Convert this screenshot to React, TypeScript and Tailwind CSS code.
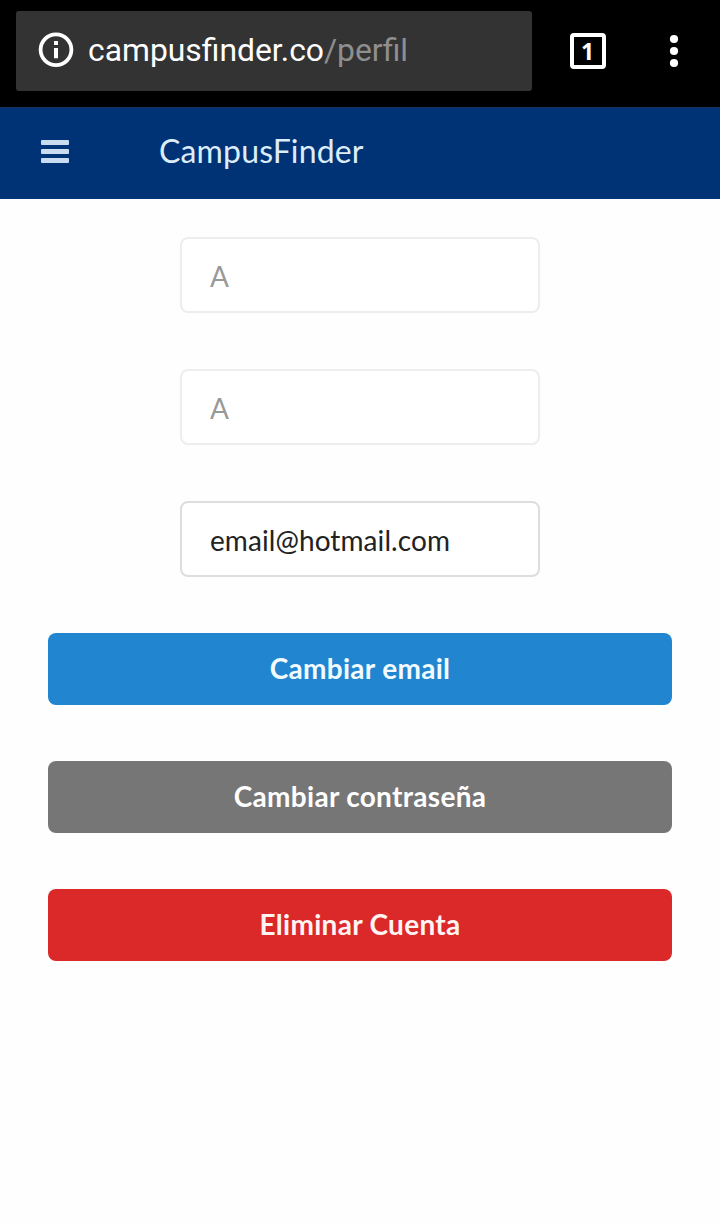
import React from "react";

function BrowserBar() {
  return (
    <header className="flex h-[107px] items-start bg-black pl-4">
      <div className="mt-[11px] flex h-20 w-[516px] items-center rounded-[3px] bg-[#333333] pb-[2px] pl-[22px]">
        <svg width="36" height="36" viewBox="0 0 36 36" fill="none">
          <circle cx="18" cy="17.8" r="15.4" stroke="#fff" strokeWidth="3.8" />
          <path d="M16 9h4v4h-4zM16 16h4v10.3h-4z" fill="#fff" />
        </svg>
        <div className="ml-[14px] whitespace-nowrap font-[Roboto] text-[31.85px] leading-10 text-white">
          campusfinder.co<span className="text-[#8f8f8f]">/perfil</span>
        </div>
      </div>
      <div className="ml-[38px] mt-[33px] flex size-9 items-center justify-center rounded-[4px] border-4 border-white pr-px font-['Open_Sans',sans-serif] text-[23px] font-bold leading-none text-white">
        1
      </div>
      <svg className="ml-[63px] mt-[34px]" width="10" height="34" viewBox="0 0 10 34" fill="#fff">
        <circle cx="5" cy="5" r="4.1" />
        <circle cx="5" cy="17" r="4.1" />
        <circle cx="5" cy="29" r="4.1" />
      </svg>
    </header>
  );
}

function NavBar() {
  return (
    <nav className="flex h-[92px] items-center border-t border-[#17325c] bg-[#003376] pb-[4px] pl-[41px]">
      <svg width="28" height="23" viewBox="0 0 28 23" fill="#c9dbf0">
        <rect y="0" width="28" height="5" rx="1" />
        <rect y="9" width="28" height="5" rx="1" />
        <rect y="18" width="28" height="5" rx="1" />
      </svg>
      <span className="ml-[90px] pb-[2px] text-[32px] leading-10 tracking-[0.15px] text-[#dcecf8]">CampusFinder</span>
    </nav>
  );
}

export default function App() {
  return (
    <div className="h-[1224px] w-[720px] overflow-hidden bg-[#fefefe] font-[Lato,sans-serif]">
      <BrowserBar />
      <NavBar />
      <main className="flex flex-col items-center gap-14 px-12 pt-[38px]">
        <input aria-label="Nombre" disabled defaultValue="A" className="h-[76px] w-[360px] rounded-lg border-2 border-[#ededee] bg-white px-7 pt-[2px] text-[28px] text-[#999999]" />
        <input aria-label="Apellido" disabled defaultValue="A" className="h-[76px] w-[360px] rounded-lg border-2 border-[#ededee] bg-white px-7 pt-[2px] text-[28px] text-[#999999]" />
        <input aria-label="Email" defaultValue="email@hotmail.com" className="h-[76px] w-[360px] rounded-lg border-2 border-[#dcddde] bg-white px-7 pt-[2px] text-[28px] tracking-[0.08px] text-[#222222]" />
        <button className="h-[72px] w-full rounded-lg bg-[#2185d0] pb-[2px] text-[28px] font-bold tracking-[0.3px] text-[#f2fbff]">Cambiar email</button>
        <button className="h-[72px] w-full rounded-lg bg-[#767676] pb-[2px] text-[28px] font-bold tracking-[0.3px] text-white">Cambiar contraseña</button>
        <button className="h-[72px] w-full rounded-lg bg-[#db2828] pb-[2px] text-[28px] font-bold tracking-[0.3px] text-[#fff4f4]">Eliminar Cuenta</button>
      </main>
    </div>
  );
}
